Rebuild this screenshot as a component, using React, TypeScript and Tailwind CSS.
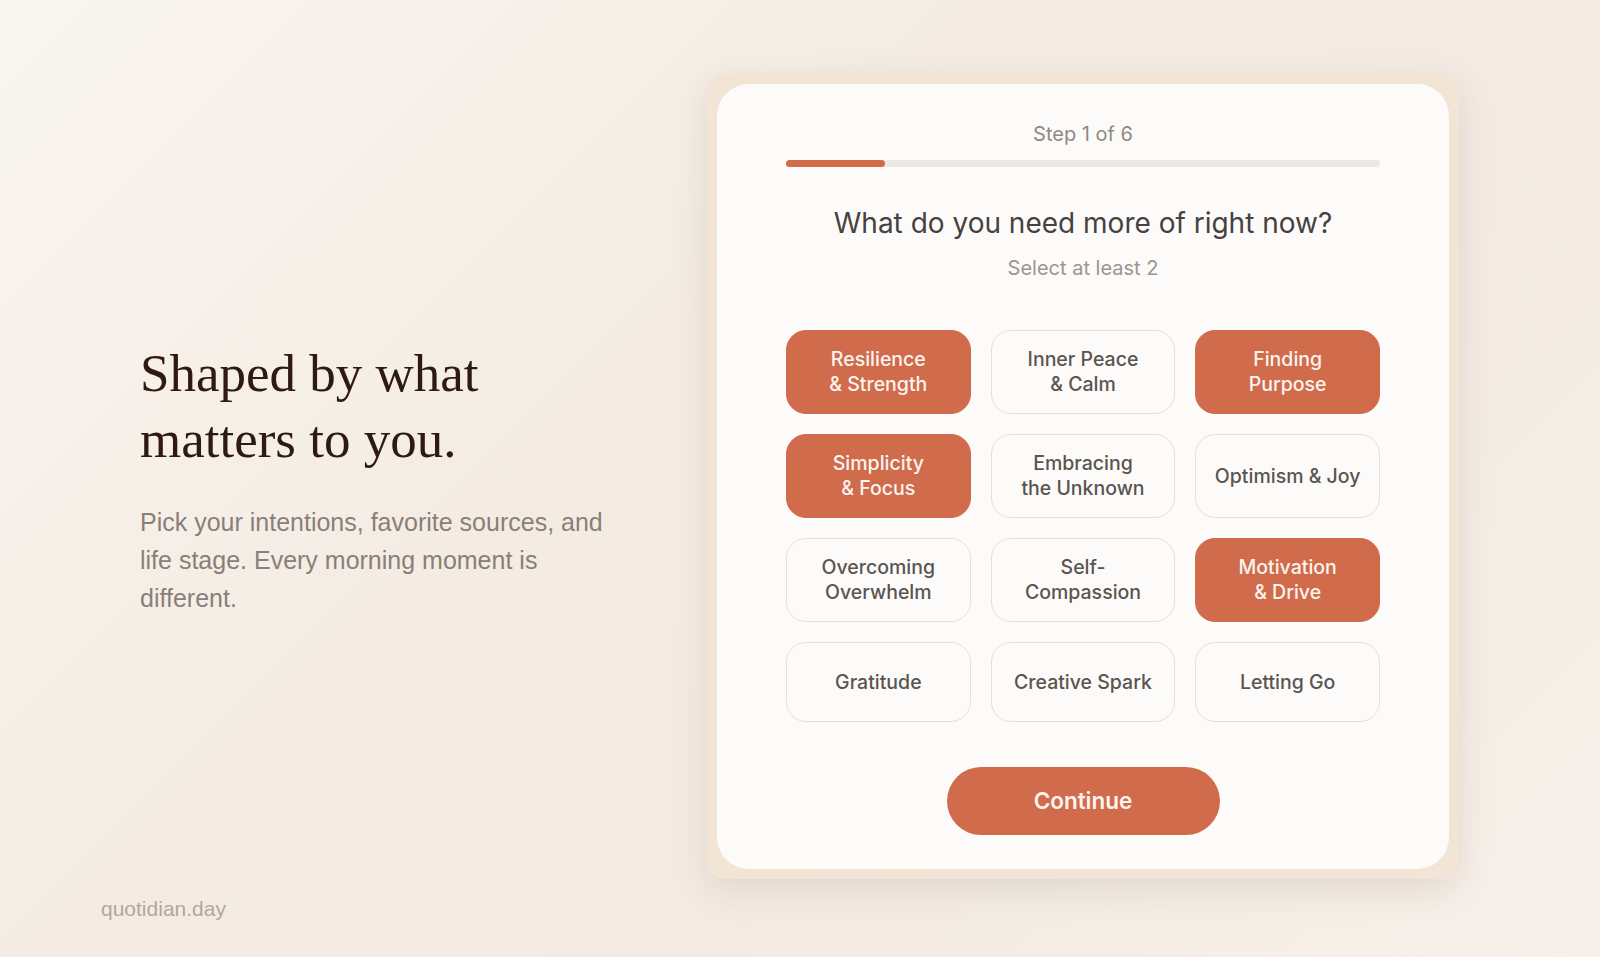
import React from "react";

const options: { label: string[]; selected: boolean }[] = [
  { label: ["Resilience", "& Strength"], selected: true },
  { label: ["Inner Peace", "& Calm"], selected: false },
  { label: ["Finding", "Purpose"], selected: true },
  { label: ["Simplicity", "& Focus"], selected: true },
  { label: ["Embracing", "the Unknown"], selected: false },
  { label: ["Optimism & Joy"], selected: false },
  { label: ["Overcoming", "Overwhelm"], selected: false },
  { label: ["Self-", "Compassion"], selected: false },
  { label: ["Motivation", "& Drive"], selected: true },
  { label: ["Gratitude"], selected: false },
  { label: ["Creative Spark"], selected: false },
  { label: ["Letting Go"], selected: false },
];

export default function App() {
  return (
    <div className="grid h-[957px] w-full overflow-hidden bg-[linear-gradient(135deg,#f9f5f1_0%,#f4ece3_40%,#f3ebe2_65%,#f7f0ea_100%)]">
      <main className="[grid-area:1/1] flex items-center justify-between pl-[140px] pr-[141px]">
        <section className="w-[480px]">
          <h1 className="font-['Liberation_Serif','Times_New_Roman',serif] text-[53px] leading-[66px] font-normal text-[#2e1a10]">
            Shaped by what
            <br />
            matters to you.
          </h1>
          <p className="mt-[31px] font-['Liberation_Sans',Arial,sans-serif] text-[25px] leading-[38px] text-[#8a7f78]">
            Pick your intentions, favorite sources, and life stage. Every morning moment is different.
          </p>
        </section>

        <div className="mb-[4px] w-[752px] rounded-[18px] bg-[#f2e5d6] p-[10px] shadow-[0_10px_36px_rgba(90,70,50,0.13)]">
          <div className="flex flex-col items-center rounded-[32px] bg-[#fdfbf9] px-[69px] pt-[37px] pb-[34px] font-['Inter','Noto_Sans',sans-serif]">
            <div className="text-[20px] leading-[27px] text-[#8e8983]">Step 1 of 6</div>
            <div className="mt-[12px] h-[7px] w-full rounded-full bg-[#ebe8e5]">
              <div className="h-full w-[99px] rounded-full bg-[#d06b4b]" />
            </div>
            <h2 className="mt-[38px] text-[28px] leading-[36px] font-normal text-[#454240]">
              What do you need more of right now?
            </h2>
            <div className="mt-[14px] text-[20px] leading-[27px] text-[#9b958f]">Select at least 2</div>

            <div className="mt-[48px] grid w-full grid-cols-3 gap-x-[20px] gap-y-[20px]">
              {options.map((o, i) => (
                <button
                  key={i}
                  className={
                    o.selected
                      ? "flex min-h-[80px] flex-col items-center justify-center rounded-[20px] border border-[#d06b4b] bg-[#d06b4b] py-[16px] text-center text-[19.5px] leading-[25px] font-medium text-[#fdf4ef]"
                      : "flex min-h-[80px] flex-col items-center justify-center rounded-[20px] border border-[#e4e0db] bg-[#fdfbf9] py-[16px] text-center text-[19.5px] leading-[25px] font-medium text-[#5a5550]"
                  }
                >
                  {o.label.map((l, j) => (
                    <span key={j}>{l}</span>
                  ))}
                </button>
              ))}
            </div>

            <button className="mt-[45px] h-[68px] w-[273px] rounded-full bg-[#d06b4b] text-[22.5px] font-semibold text-[#fdf4ef]">
              Continue
            </button>
          </div>
        </div>
      </main>
      <footer className="[grid-area:1/1] self-end justify-self-start pl-[101px] pb-[35px] font-['Liberation_Sans',Arial,sans-serif] text-[21px] leading-[27px] text-[#b3a69b]">
        quotidian.day
      </footer>
    </div>
  );
}
